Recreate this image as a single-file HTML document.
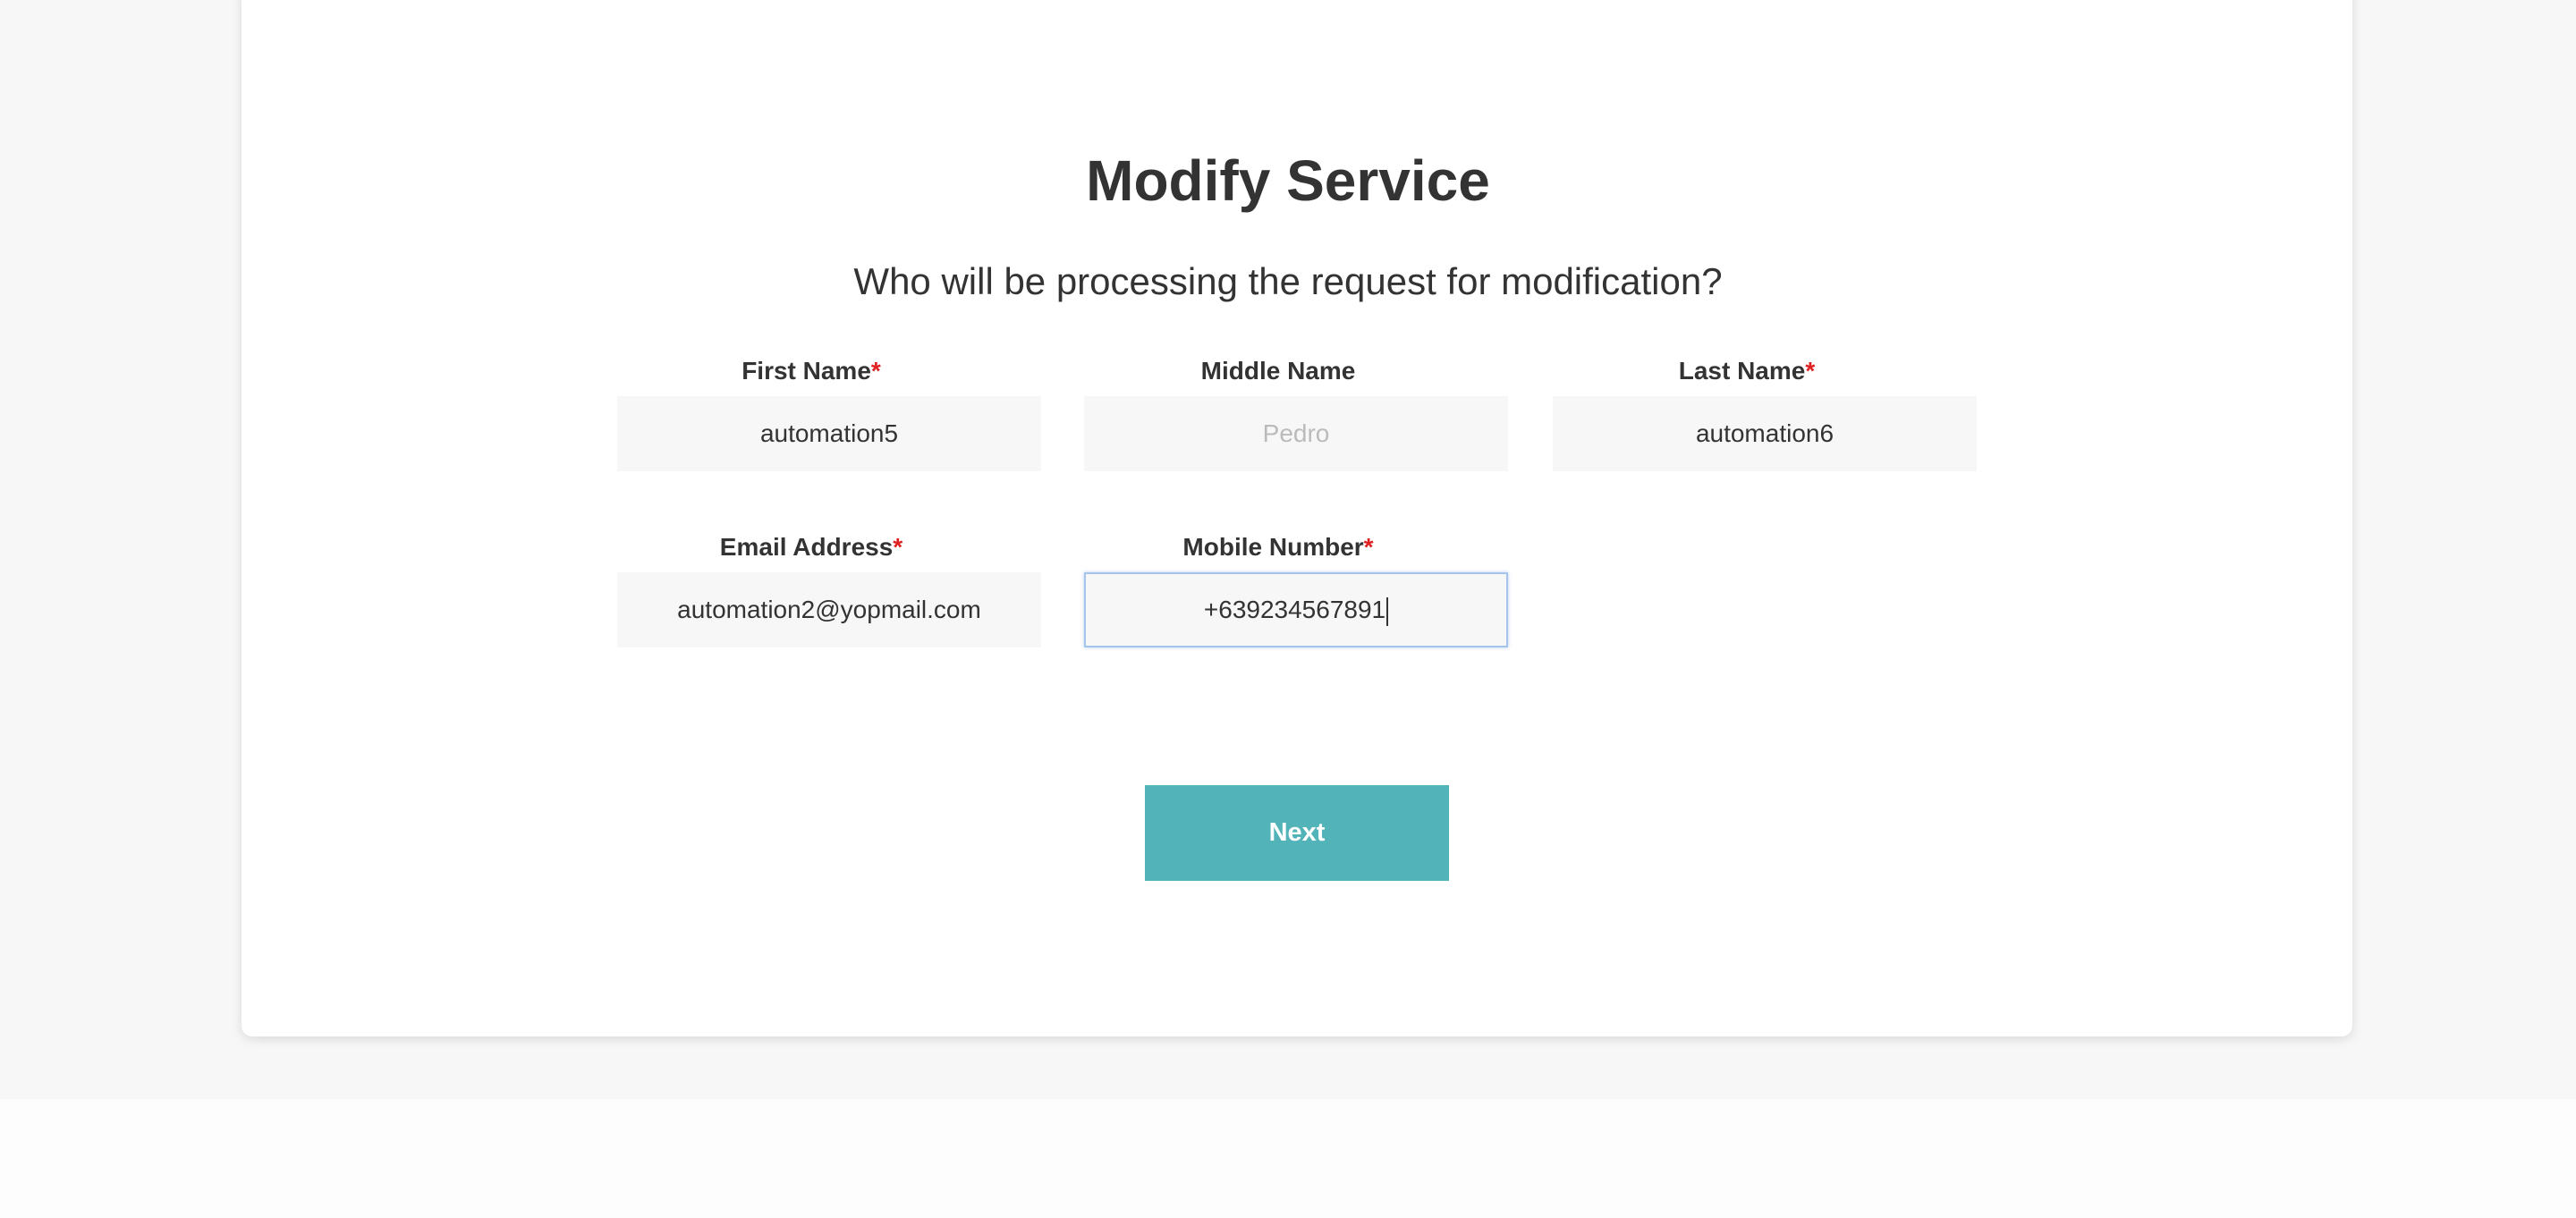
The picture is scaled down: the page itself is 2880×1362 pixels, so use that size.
<!DOCTYPE html>
<html><head><meta charset="utf-8"><style>
*{box-sizing:border-box;margin:0;padding:0}
html,body{width:2880px;height:1362px;overflow:hidden;font-family:"Liberation Sans",Arial,sans-serif;color:#333}
body{background:#fdfdfd}
.bg{position:absolute;left:0;top:0;width:2880px;height:1229px;background:#f7f7f7}
.card{position:absolute;left:270px;top:-20px;width:2360px;height:1179px;background:#fff;border-radius:12px;box-shadow:0 3px 12px rgba(0,0,0,.12)}
h1{position:absolute;left:0;width:2880px;top:165px;text-align:center;font-size:64px;font-weight:bold;color:#333}
.sub{position:absolute;left:0;width:2880px;top:291px;text-align:center;font-size:42px;color:#333}
.lab{position:absolute;width:474px;text-align:center;font-size:28px;font-weight:bold;color:#333}
.lab b{color:#e02020}
.in{position:absolute;width:474px;height:84px;background:#f7f7f7;text-align:center;line-height:84px;font-size:28px;color:#333}
.ph{color:#bbb}
.focus{border:2px solid #a5c4ea;box-shadow:0 0 4px rgba(120,160,230,.5);line-height:80px}
.btn{position:absolute;left:1280px;top:878px;width:340px;height:107px;background:#52b3b9;color:#fff;font-weight:bold;font-size:29px;text-align:center;line-height:107px}
.cur{display:inline-block;width:2px;height:32px;background:#333;vertical-align:middle;margin-left:1px}
</style></head><body>
<div class="bg"></div>
<div class="card"></div>
<h1>Modify Service</h1>
<div class="sub">Who will be processing the request for modification?</div>
<div class="lab" style="left:670px;top:399px">First Name<b>*</b></div>
<div class="lab" style="left:1192px;top:399px">Middle Name</div>
<div class="lab" style="left:1716px;top:399px">Last Name<b>*</b></div>
<div class="in" style="left:690px;top:443px">automation5</div>
<div class="in ph" style="left:1212px;top:443px">Pedro</div>
<div class="in" style="left:1736px;top:443px">automation6</div>
<div class="lab" style="left:670px;top:596px">Email Address<b>*</b></div>
<div class="lab" style="left:1192px;top:596px">Mobile Number<b>*</b></div>
<div class="in" style="left:690px;top:640px">automation2@yopmail.com</div>
<div class="in focus" style="left:1212px;top:640px">+639234567891<span class="cur"></span></div>
<div class="btn">Next</div>
</body></html>
